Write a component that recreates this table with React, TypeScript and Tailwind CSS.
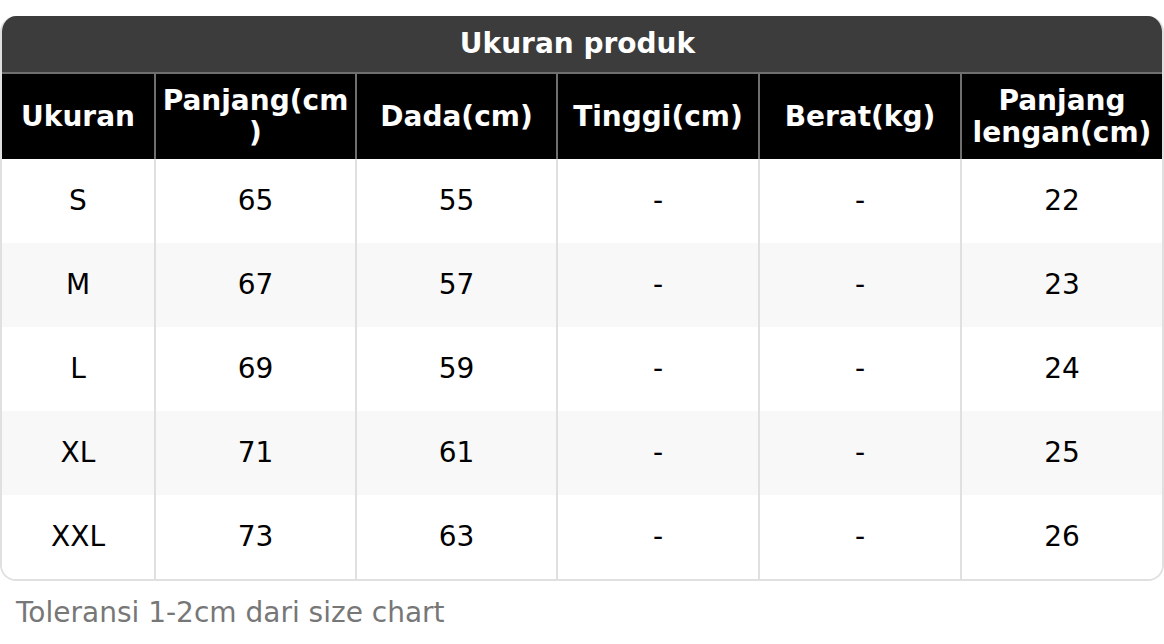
import React from "react";

const rows = [
  { size: "S", panjang: "65", dada: "55", tinggi: "-", berat: "-", lengan: "22" },
  { size: "M", panjang: "67", dada: "57", tinggi: "-", berat: "-", lengan: "23" },
  { size: "L", panjang: "69", dada: "59", tinggi: "-", berat: "-", lengan: "24" },
  { size: "XL", panjang: "71", dada: "61", tinggi: "-", berat: "-", lengan: "25" },
  { size: "XXL", panjang: "73", dada: "63", tinggi: "-", berat: "-", lengan: "26" },
];

const headers: React.ReactNode[] = [
  "Ukuran",
  <>
    Panjang(cm
    <br />)
  </>,
  "Dada(cm)",
  "Tinggi(cm)",
  "Berat(kg)",
  <>
    Panjang
    <br />
    lengan(cm)
  </>,
];

export default function App() {
  return (
    <div className="bg-white w-[1164px] h-[644px] pt-[16px] font-['DejaVu_Sans',sans-serif] text-[28px]">
      <div className="rounded-[16px] overflow-hidden border-2 border-t-0 border-[#e0e0e0]">
        <div className="bg-[#3c3c3c] text-white font-bold text-center h-[56px] leading-[56px] pr-[9px]">Ukuran produk</div>
        <table className="w-full border-collapse table-fixed">
          <colgroup>
            <col className="w-[153px]" />
            <col className="w-[201px]" />
            <col className="w-[201px]" />
            <col className="w-[202px]" />
            <col className="w-[202px]" />
            <col />
          </colgroup>
          <thead>
            <tr className="bg-black text-white h-[86px]">
              {headers.map((h, i) => (
                <th
                  key={i}
                  className={`font-bold leading-[32px] px-0 whitespace-nowrap border-t-2 border-[#6f6f6f] ${i > 0 ? "border-l-2" : ""}`}
                >
                  {h}
                </th>
              ))}
            </tr>
          </thead>
          <tbody>
            {rows.map((r, idx) => (
              <tr key={r.size} className={`h-[84px] ${idx % 2 === 1 ? "bg-[#f8f8f8]" : "bg-white"}`}>
                {[r.size, r.panjang, r.dada, r.tinggi, r.berat, r.lengan].map((v, i) => (
                  <td key={i} className={`text-center text-black ${i > 0 ? "border-l-2 border-[#e0e0e0]" : ""}`}>
                    {v}
                  </td>
                ))}
              </tr>
            ))}
          </tbody>
        </table>
      </div>
      <p className="text-[#777777] pl-[16px] mt-[12px] leading-[40px]">Toleransi 1-2cm dari size chart</p>
    </div>
  );
}
